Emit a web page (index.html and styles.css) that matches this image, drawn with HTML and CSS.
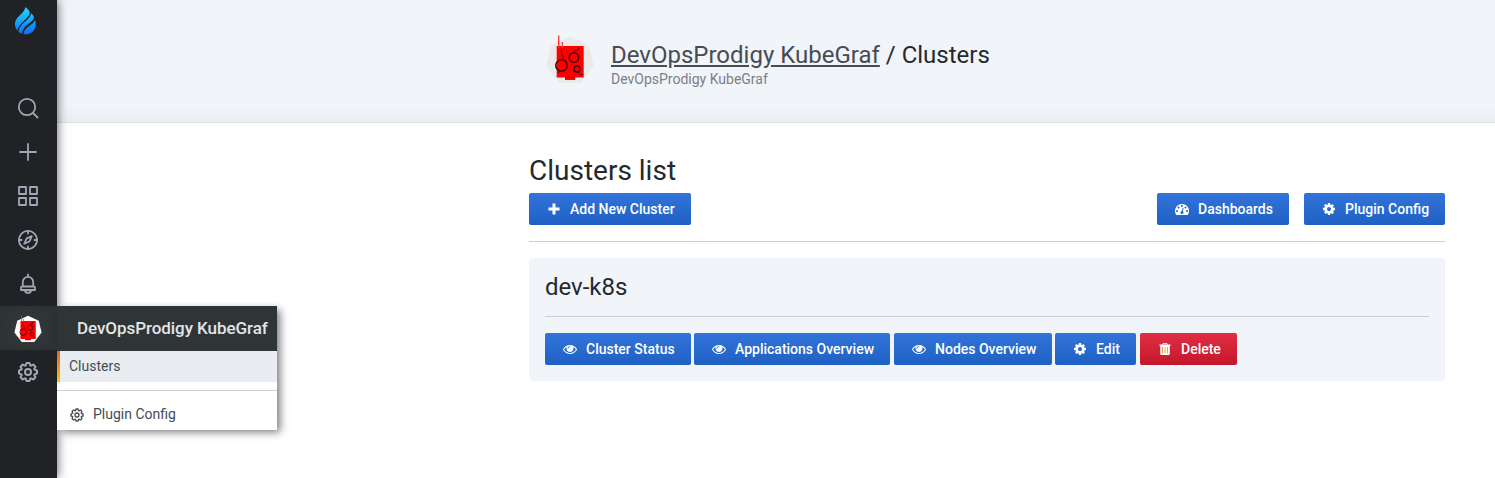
FILE: index.html
```html
<!DOCTYPE html>
<html lang="en">
<head>
<meta charset="utf-8">
<title>DevOpsProdigy KubeGraf - Clusters</title>
<link rel="stylesheet" href="styles.css">
</head>
<body>
<svg class="defs" width="0" height="0">
  <defs>
    <linearGradient id="flame" gradientUnits="userSpaceOnUse" x1="10" y1="0" x2="12" y2="28"><stop offset="0" stop-color="#25d5f7"/><stop offset=".5" stop-color="#12a8fa"/><stop offset="1" stop-color="#1267f5"/></linearGradient>
    <symbol id="cog" viewBox="0 0 24 24"><path d="M21.32,9.55l-1.89-.63.89-1.78A1,1,0,0,0,20.13,6L18,3.87a1,1,0,0,0-1.15-.19l-1.78.89-.63-1.89A1,1,0,0,0,13.5,2h-3a1,1,0,0,0-.95.68L8.92,4.57,7.14,3.68A1,1,0,0,0,6,3.87L3.87,6a1,1,0,0,0-.19,1.15l.89,1.78-1.89.63A1,1,0,0,0,2,10.500v3a1,1,0,0,0,.68.95l1.890.63-.89,1.780A1,1,0,0,0,3.870,18L6,20.130a1,1,0,0,0,1.150.19l1.780-.89.63,1.890a1,1,0,0,0,.95.68h3a1,1,0,0,0,.95-.68l.63-1.890,1.780.89A1,1,0,0,0,18,20.130L20.130,18a1,1,0,0,0,.19-1.150l-.89-1.780,1.890-.63A1,1,0,0,0,22,13.500v-3A1,1,0,0,0,21.320,9.550ZM20,12.780l-1.200.4A2,2,0,0,0,17.640,16l.57,1.140-1.100,1.100L16,17.640a2,2,0,0,0-2.790,1.160l-.4,1.200H11.220l-.4-1.200A2,2,0,0,0,8,17.640l-1.140.57-1.100-1.100L6.360,16A2,2,0,0,0,5.200,13.180L4,12.780V11.220l1.200-.4A2,2,0,0,0,6.360,8L5.790,6.890l1.100-1.100L8,6.360A2,2,0,0,0,10.820,5.200l.4-1.200h1.560l.4,1.200A2,2,0,0,0,16,6.360l1.140-.57,1.100,1.100L17.640,8a2,2,0,0,0,1.160,2.790l1.200.4ZM12,8a4,4,0,1,0,4,4A4,4,0,0,0,12,8Zm0,6a2,2,0,1,1,2-2A2,2,0,0,1,12,14Z"/></symbol>
    <symbol id="kube" viewBox="0 0 60 60">
      <path class="kube-plate" d="M30 6.500L49 15.500L54 36L41 53H19L6 36L11 15.500Z"/>
      <path d="M16.700 16H43.700V47.500H35.200V50H25V47.500H16.700Z" fill="#f00"/>
      <path d="M18.700 5.500V18M22.300 12V18" fill="none" stroke="#f33" stroke-width="1.300"/>
      <g fill="none" stroke="#4c0008" stroke-width="1.600"><circle cx="21.500" cy="35.500" r="5.700"/><circle cx="34" cy="27.500" r="4.700"/><circle cx="37" cy="39" r="3"/><path d="M21.500 18V24L23 26V30M38 17V20L34 21V23M18 43L20 41M38 42L40.500 44.500H43" stroke-width=".9"/></g>
      <path d="M25 47.500H35" stroke="#b00" stroke-width="1.200"/>
    </symbol>
    <symbol id="fa-eye" viewBox="0 0 1792 1792"><path d="M1664 960q-152-236-381-353 61 104 61 225 0 185-131.500 316.500t-316.500 131.500-316.500-131.500-131.500-316.500q0-121 61-225-229 117-381 353 133 205 333.500 326.500t434.500 121.500 434.500-121.500 333.500-326.500zm-720-384q0-20-14-34t-34-14q-125 0-214.500 89.500t-89.500 214.500q0 20 14 34t34 14 34-14 14-34q0-86 61-147t147-61q20 0 34-14t14-34zm848 384q0 34-20 69-140 230-376.500 368.500t-499.500 138.500-499.500-139-376.500-368q-20-35-20-69t20-69q140-229 376.500-368t499.500-139 499.500 139 376.500 368q20 35 20 69z"/></symbol>
    <symbol id="fa-cog" viewBox="0 0 1792 1792"><path d="M1152 896q0-106-75-181t-181-75-181 75-75 181 75 181 181 75 181-75 75-181zm512-109v222q0 12-8 23t-20 13l-185 28q-19 54-39 91 35 50 107 138 10 12 10 25t-9 23q-27 37-99 108t-94 71q-12 0-26-9l-138-108q-44 23-91 38-16 136-29 186-7 28-36 28h-222q-14 0-24.500-8.500t-11.500-21.500l-28-184q-49-16-90-37l-141 107q-10 9-25 9-14 0-25-11-126-114-165-168-7-10-7-23 0-12 8-23 15-21 51-66.500t54-70.500q-27-50-41-99l-183-27q-13-2-21-12.500t-8-23.500v-222q0-12 8-23t19-13l186-28q14-46 39-92-40-57-107-138-10-12-10-24 0-10 9-23 26-36 98.500-107.500t94.500-71.500q13 0 26 10l138 107q44-23 91-38 16-136 29-186 7-28 36-28h222q14 0 24.500 8.500t11.500 21.500l28 184q49 16 90 37l142-107q9-9 24-9 13 0 25 10 129 119 165 170 7 8 7 22 0 12-8 23-15 21-51 66.500t-54 70.500q26 50 41 98l183 28q13 2 21 12.500t8 23.500z"/></symbol>
  </defs>
</svg>
<div class="app">
  <nav class="sidemenu">
    <a class="brand"><svg width="21" height="28" viewBox="0 0 21 28"><g fill="url(#flame)"><path d="M10.500 0C12 1.500 14.500 3.500 14.800 5.500C15 11 4.500 15 2.300 23.500C.8 21.500 0 19.500 0 17C0 9.500 9 7.500 10.500 0Z"/><path d="M16.200 6.300C18 8 19 9.500 19 11C17.500 16 8.500 17.500 6.800 26.700C5.300 26.100 4.200 25.500 3.500 24.700C4.500 16 14.500 14 16.200 6.300Z"/><path d="M20 13C20.700 15 20.900 17.500 20.400 20C19.200 24.500 15.500 27.500 9.700 27.300L8.400 27C9.500 19.500 17.500 19 20 13Z"/></g></svg></a>
    <a class="item"><svg width="24" height="24" viewBox="0 0 24 24" class="line"><circle cx="11" cy="11" r="8.200"/><path d="M17 17L21.500 21.500"/></svg></a>
    <a class="item"><svg width="24" height="24" viewBox="0 0 24 24" class="line"><path d="M12 4V20M4 12H20"/></svg></a>
    <a class="item"><svg width="24" height="24" viewBox="0 0 24 24" class="line"><path d="M3 3H10V10H3ZM14 3H21V10H14ZM3 14H10V21H3ZM14 14H21V21H14Z"/></svg></a>
    <a class="item"><svg width="24" height="24" viewBox="0 0 24 24" class="line"><circle cx="12" cy="12" r="9.100"/><path d="M12 3V5.500M12 18.500V21M3 12H5.500M18.500 12H21M15.800 8.200L10.700 10.300L8.200 15.800L13.400 13.500Z"/></svg></a>
    <a class="item"><svg width="24" height="24" viewBox="0 0 24 24" class="line"><path d="M12 2.500V4.500M6.800 14.500V10A5.200 5.200 0 0 1 17.200 10V14.500M6 14.500H18Q19 14.500 19 15.500V18H5V15.500Q5 14.500 6 14.500M9 18.500C9.500 21.700 14.500 21.700 15 18.500"/></svg></a>
    <a class="item active"><svg class="plugin-icon" width="34" height="34"><use href="#kube"/></svg></a>
    <a class="item"><svg width="24" height="24"><use href="#cog"/></svg></a>
    <div class="dropdown">
      <div class="dropdown-title">DevOpsProdigy KubeGraf</div>
      <a class="dropdown-link selected">Clusters</a>
      <div class="dropdown-divider"></div>
      <a class="dropdown-link config"><svg width="16" height="16"><use href="#cog"/></svg><span>Plugin Config</span></a>
    </div>
  </nav>
  <main class="page">
    <header class="page-header">
      <svg class="page-logo" width="60" height="60"><use href="#kube"/></svg>
      <div>
        <h1><a>DevOpsProdigy KubeGraf</a> / Clusters</h1>
        <div class="subtitle">DevOpsProdigy KubeGraf</div>
      </div>
    </header>
    <section class="content">
      <h2>Clusters list</h2>
      <div class="toolbar">
        <button class="btn add"><svg width="14" height="14" viewBox="0 0 14 14"><path d="M5.500 1.500h3v4h4v3h-4v4h-3v-4h-4v-3h4z"/></svg>Add New Cluster</button>
        <button class="btn dash"><svg width="14" height="14" viewBox="0 0 1792 1792"><path d="M384 1152q0-53-37.500-90.500t-90.500-37.500-90.500 37.500-37.500 90.500 37.500 90.500 90.500 37.500 90.500-37.500 37.500-90.500zm192-448q0-53-37.500-90.500t-90.500-37.500-90.500 37.500-37.500 90.500 37.500 90.500 90.500 37.500 90.500-37.500 37.500-90.500zm428 481l101-382q6-26-7.500-48.500t-38.500-29.500-48 6.500-30 39.500l-101 382q-60 5-107 43.500t-63 98.500q-20 77 20 146t117 89 146-20 89-117q16-60-6-117t-72-91zm660-33q0-53-37.500-90.500t-90.500-37.500-90.500 37.500-37.500 90.500 37.500 90.500 90.500 37.500 90.500-37.500 37.500-90.500zm-640-640q0-53-37.500-90.500t-90.500-37.500-90.500 37.500-37.500 90.500 37.500 90.500 90.500 37.500 90.500-37.500 37.500-90.500zm448 192q0-53-37.500-90.500t-90.500-37.500-90.500 37.500-37.500 90.500 37.500 90.500 90.500 37.500 90.500-37.500 37.500-90.500zm320 448q0 261-141 483-19 29-54 29h-1402q-35 0-54-29-141-221-141-483 0-182 71-348t191-286 286-191 348-71 348 71 286 191 191 286 71 348z"/></svg>Dashboards</button>
        <button class="btn plugin"><svg width="14" height="14"><use href="#fa-cog"/></svg>Plugin Config</button>
      </div>
      <article class="card">
        <h3>dev-k8s</h3>
        <div class="actions">
          <button class="btn status"><svg width="14" height="14"><use href="#fa-eye"/></svg>Cluster Status</button>
          <button class="btn apps"><svg width="14" height="14"><use href="#fa-eye"/></svg>Applications Overview</button>
          <button class="btn nodes"><svg width="14" height="14"><use href="#fa-eye"/></svg>Nodes Overview</button>
          <button class="btn edit"><svg width="14" height="14"><use href="#fa-cog"/></svg>Edit</button>
          <button class="btn danger"><svg width="14" height="14" viewBox="0 0 14 14"><path fill-rule="evenodd" d="M5 1H9L9.800 2.500H12.500V4H11.800V12L11 13H3L2.200 12V4H1.500V2.500H4.200ZM5.600 1.800L5.200 2.600H8.800L8.400 1.800Z"/><path d="M4.500 5V11.500M7 5V11.500M9.500 5V11.500" stroke="#f0a23c" stroke-width="1"/></svg>Delete</button>
        </div>
      </article>
    </section>
  </main>
</div>
</body>
</html>
```
FILE: styles.css
```css
* { box-sizing: border-box; }
body { margin: 0; background: #fff; color: #24292e; font: 14px/20px Roboto, sans-serif; }
.defs { position: absolute; }
.app { display: flex; height: 478px; overflow: hidden; }
svg { display: block; flex: none; fill: currentColor; }
.line { fill: none; stroke: currentColor; stroke-width: 1.8; stroke-linejoin: round; stroke-linecap: round; }

.sidemenu { position: relative; z-index: 2; flex: none; width: 57px; background: #202226; color: #9fa7b3; box-shadow: 0 0 10px rgba(30, 28, 40, .75); }
.brand { display: flex; height: 86px; padding: 7px 0 0 15px; }
.item { display: flex; height: 44px; align-items: center; justify-content: center; padding-right: 1px; }
.item.active { padding-top: 1px; background: radial-gradient(circle at 28px 22px, #343a3c, #2d3235 75%); }
.kube-plate { fill: var(--plate, #ebeaea); }
.plugin-icon { --plate: #fff; }

.dropdown { position: absolute; left: 57px; top: 306px; width: 220px; height: 124px; background: #fff; color: #464c54; box-shadow: 4px 3px 8px -1px rgba(30, 28, 40, .6); }
.dropdown-title { height: 45px; padding-left: 20px; background: #2f3437; color: #e3e5e8; font-size: 17px; font-weight: 500; line-height: 44px; letter-spacing: -.06px; white-space: nowrap; }
.dropdown-link { display: flex; align-items: center; }
.selected { height: 31px; padding: 0 0 2px 9px; border-left: 3px solid; border-image: linear-gradient(#f05a28, #fbca0a) 1; background: #e9ecf1; }
.dropdown-divider { height: 1px; margin: 8px 0; background: #c7d0d9; }
.config { height: 31px; gap: 8px; padding-left: 12px; }
.config span { padding-bottom: 2px; }

.page { flex: 1; min-width: 0; }
.page-header { display: flex; gap: 11px; height: 123px; padding: 30px 0 0 483px; border-bottom: 1px solid #dce1e6; background: linear-gradient(#f1f4f9 0 107px, #eaedf2); }
h1, h2, h3 { margin: 0; font-weight: 400; }
h1 { padding-top: 9px; font-size: 24px; line-height: 32px; }
h1 a { color: #464c54; text-decoration: underline; }
.subtitle { line-height: 16px; color: #7b8087; }
.content { padding: 30px 50px 0 472px; }
h2 { height: 40px; font-size: 28px; line-height: 35px; }
.toolbar { display: flex; gap: 15px; height: 49px; border-bottom: 1px solid #c7d0d9; }
.btn { display: flex; align-items: center; gap: 9px; height: 32px; padding: 0 0 0 18px; border: 0; border-radius: 2px; background: linear-gradient(#3274d9, #1f60c4); color: #fff; font: 500 14px/32px Roboto, sans-serif; white-space: nowrap; }
.add { width: 162px; margin-right: auto; }
.dash { width: 132px; }
.plugin { width: 141px; }
.card { height: 123px; margin-top: 16px; padding: 0 16px; border-radius: 4px; background: #f1f4f9; }
h3 { height: 59px; padding-top: 13px; border-bottom: 1px solid #c7d0d9; font-size: 24px; line-height: 32px; }
.actions { display: flex; gap: 3px; padding-top: 16px; }
.status { width: 146px; }
.apps { width: 196px; }
.nodes { width: 158px; margin-left: 1px; }
.edit { width: 81px; }
.danger { width: 97px; margin-left: 1px; background: linear-gradient(#e02f44, #c4162a); }
```
